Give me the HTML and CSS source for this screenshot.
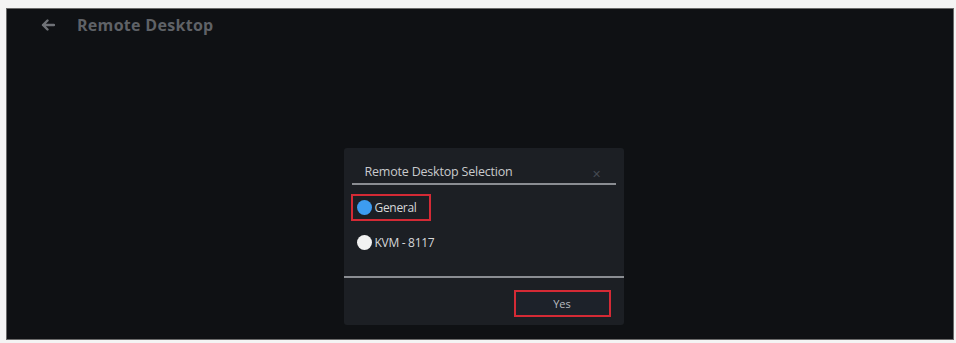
FILE: index.html
```html
<!DOCTYPE html>
<html>
<head>
<title>Remote Desktop</title>
<meta charset="UTF-8">
<meta name="viewport" content="width=device-width, initial-scale=1.0">
<link rel="stylesheet" href="styles.css">
</head>
<body>
<div class="screen">
<div class="topbar">
<svg class="back" width="14" height="12" viewBox="0 0 14 12"><path d="M13 6H2M6.5 1.5L2 6l4.5 4.5" fill="none" stroke="#6f7277" stroke-width="2.4" stroke-linecap="round" stroke-linejoin="round"/></svg>
<h1>Remote Desktop</h1>
</div>
<div class="stage">
<div class="dialog">
<div class="dialog-head">
<span class="dialog-title">Remote Desktop Selection</span>
<span class="close">&#x2715;</span>
</div>
<div class="options">
<label class="option selected"><span class="dot blue"></span>General</label>
<label class="option"><span class="dot white"></span>KVM - 8117</label>
</div>
<div class="dialog-foot">
<button class="yes">Yes</button>
</div>
</div>
</div>
</div>
</body>
</html>
```
FILE: styles.css
```css
body{
    margin: 0;
    background: #f4f4f4;
    font-family: "Open Sans", "Noto Sans", sans-serif;
}
.screen{
    margin: 8px 2px 2px 6px;
    height: 332px;
    background: #0f1114;
    border: 1px solid #6a6a6a;
    box-sizing: border-box;
    display: flex;
    flex-direction: column;
}
.topbar{
    display: flex;
    align-items: center;
    height: 32px;
    padding-left: 34px;
}
.back{
    margin-right: 22px;
}
.topbar h1{
    margin: 0;
    font-size: 16px;
    font-weight: 700;
    color: #5f6267;
    letter-spacing: 0.3px;
}
.stage{
    flex: 1;
    display: flex;
    justify-content: center;
    padding-top: 107px;
    padding-left: 7px;
}
.dialog{
    width: 280px;
    height: 177px;
    background: #1c1f24;
    border-radius: 3px;
    display: flex;
    flex-direction: column;
}
.dialog-head{
    display: flex;
    justify-content: space-between;
    align-items: center;
    margin: 0 8px;
    padding: 11px 15px 0 13px;
    height: 24px;
    border-bottom: 2px solid #8a8d92;
}
.dialog-title{
    font-size: 12.5px;
    color: #c9cacc;
    letter-spacing: -0.2px;
}
.close{
    font-size: 11px;
    color: #444951;
    margin-top: 4px;
}
.options{
    display: flex;
    flex-direction: column;
    gap: 8px;
    padding: 9px 0 0 7px;
    height: 82px;
    border-bottom: 2px solid #8a8d92;
}
.option{
    display: flex;
    align-items: center;
    width: fit-content;
    height: 27px;
    box-sizing: border-box;
    padding: 0 6px 0 6px;
    font-size: 12px;
    color: #d6d7d9;
    letter-spacing: -0.3px;
}
.option.selected{
    border: 2px solid #d42a35;
    padding: 0 12px 0 4px;
}
.dot{
    width: 15px;
    height: 15px;
    border-radius: 50%;
    margin-right: 3px;
}
.dot.blue{
    background: #3d9cf0;
}
.dot.white{
    background: #f2f2f2;
}
.dialog-foot{
    display: flex;
    justify-content: flex-end;
    padding: 12px 13px 0 0;
}
.yes{
    width: 97px;
    height: 27px;
    background: #1d222a;
    border: 2px solid #d42a35;
    color: #b9bcc0;
    font-family: "Open Sans", sans-serif;
    font-size: 11px;
}
```
